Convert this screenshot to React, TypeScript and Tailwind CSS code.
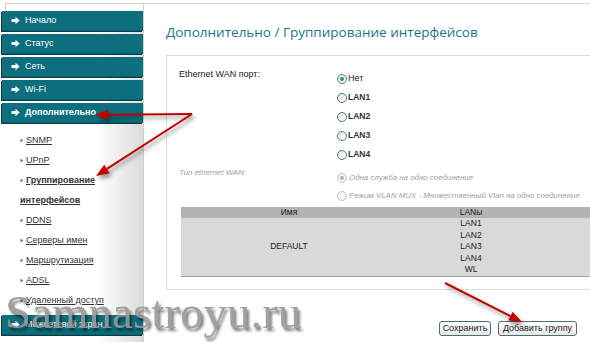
import React from 'react'

const topMenu = ['Начало', 'Статус', 'Сеть', 'Wi-Fi']
const subMenu = ['SNMP', 'UPnP', 'Группирование интерфейсов', 'DDNS', 'Серверы имен', 'Маршрутизация', 'ADSL', 'Удаленный доступ']
const ports = ['Нет', 'LAN1', 'LAN2', 'LAN3', 'LAN4']
const lans = ['LAN1', 'LAN2', 'LAN3', 'LAN4', 'WL']

function BarArrow() {
  return (
    <svg width="9" height="9" viewBox="0 0 9 9" className="shrink-0">
      <path d="M0.5 3 H4.5 V0.8 L8.6 4.5 L4.5 8.2 V6 H0.5 Z" fill="#fff" />
    </svg>
  )
}

function MenuBar({ label, bold }: { label: string; bold?: boolean }) {
  return (
    <div className="ml-[2px] w-[141px] h-[20px] bg-[#0d6f7e] flex items-center gap-[5px] pl-[9px] shadow-[-1px_1px_0_#07404a] border-b border-[#0a5d6a]">
      <BarArrow />
      <span className={`text-white text-[9px] ${bold ? 'font-bold' : ''}`}>{label}</span>
    </div>
  )
}

function Radio({ checked, disabled }: { checked?: boolean; disabled?: boolean }) {
  return (
    <span
      className={`w-[10px] h-[10px] rounded-full border flex items-center justify-center shrink-0 ${
        disabled ? 'border-[#c4c4c4] bg-[#f6f6f6]' : 'border-[#5a7688] bg-[linear-gradient(135deg,#dfe3e6,#ffffff)]'
      }`}
    >
      {checked && <span className={`w-[4px] h-[4px] rounded-full ${disabled ? 'bg-[#b0b0b0]' : 'bg-[#2f9a3c]'}`} />}
    </span>
  )
}

function Arrow({ x1, y1, x2, y2 }: { x1: number; y1: number; x2: number; y2: number }) {
  const a = Math.atan2(y2 - y1, x2 - x1)
  const len = 13
  const w = 5
  const bx = x2 - Math.cos(a) * len
  const by = y2 - Math.sin(a) * len
  const px = -Math.sin(a) * w
  const py = Math.cos(a) * w
  return (
    <g>
      <line x1={x1} y1={y1} x2={bx} y2={by} stroke="#c40000" strokeWidth="2" />
      <polygon points={`${x2},${y2} ${bx + px},${by + py} ${bx - px},${by - py}`} fill="#c40000" />
    </g>
  )
}

export default function App() {
  return (
    <div className="relative w-[590px] h-[342px] overflow-hidden bg-white font-['Liberation_Sans',sans-serif] text-[#222]">
      <div className="flex h-full">
        {/* left menu */}
        <div className="w-[145px] shrink-0 pt-[3px]">
          <div className="h-full border-r border-[#cfcfcf] bg-[linear-gradient(to_right,#ffffff_68%,#dcdcdc)] mr-[1px]">
            <div className="ml-[5px] h-[8px] border-l border-t border-[#cfcfcf] bg-white" />
            <div className="flex flex-col gap-[3px]">
              {topMenu.map((m) => (
                <MenuBar key={m} label={m} />
              ))}
              <MenuBar label="Дополнительно" bold />
            </div>
            <ul className="pt-[7px] pl-[20px] pr-[8px]">
              {subMenu.map((s) => {
                const active = s.startsWith('Групп')
                return (
                  <li key={s} className="leading-[20px] text-[9px]">
                    <svg width="4" height="5" viewBox="0 0 4 5" className="inline-block mr-[2px] align-middle">
                      <path d="M0.5 0.5 L3.5 2.5 L0.5 4.5 Z" fill="#4b95a6" />
                    </svg>
                    <span className={`underline text-[#333] ${active ? 'font-bold text-[#111]' : ''}`}>{s}</span>
                  </li>
                )
              })}
            </ul>
            <div className="mt-[5px]">
              <MenuBar label="Межсетевой экран" />
            </div>
          </div>
        </div>

        {/* main */}
        <div className="flex-1 pt-[3px] min-w-0">
          <div className="border-t border-[#d6d6d6] h-full">
            <h1 className="mt-[19px] ml-[21px] text-[13.5px] leading-[18px] text-[#1a7686] font-['Open_Sans',sans-serif] whitespace-nowrap">
              Дополнительно / Группирование интерфейсов
            </h1>
            <div className="mt-[14px] ml-[21px] w-[440px] border border-[#dcdcdc] pt-[12px] pb-[12px] pl-[12px] text-[9px]">
              <div className="flex">
                <div className="w-[158px] leading-[12px] text-[#222]">Ethernet WAN порт:</div>
                <div className="mt-[1px] flex flex-col">
                  {ports.map((p, i) => (
                    <div key={p} className="h-[19px] flex items-center gap-[1px]">
                      <Radio checked={i === 0} />
                      <span className={i === 0 ? 'text-[#222]' : 'font-bold text-[#333] text-[8.5px]'}>{p}</span>
                    </div>
                  ))}
                </div>
              </div>
              <div className="flex mt-[3px] italic text-[#a0a0a0] text-[7.9px]">
                <div className="w-[158px] leading-[12px]">Тип ethernet WAN:</div>
                <div className="mt-[2px] flex flex-col">
                  <div className="h-[18px] flex items-center gap-[2px]">
                    <Radio checked disabled />
                    <span>Одна служба на одно соединение</span>
                  </div>
                  <div className="h-[18px] flex items-center gap-[2px] whitespace-nowrap">
                    <Radio disabled />
                    <span>Режим VLAN MUX - Множественный Vlan на одно соединение</span>
                  </div>
                </div>
              </div>
              <div className="mt-[2px] ml-[2px] text-[8.5px] text-[#222] border-b border-[#a6a6a6]">
                <div className="grid grid-cols-[216px_148px_1fr] bg-[#b3b3b3] h-[11px] leading-[11px]">
                  <div className="text-center">Имя</div>
                  <div className="text-center">LANы</div>
                  <div />
                </div>
                <div className="grid grid-cols-[216px_148px_1fr] bg-[#d9d9d9]">
                  <div className="flex items-center justify-center">DEFAULT</div>
                  <div className="flex flex-col">
                    {lans.map((l) => (
                      <div key={l} className="text-center leading-[11.5px]">
                        {l}
                      </div>
                    ))}
                  </div>
                  <div />
                </div>
              </div>
            </div>
            <div className="mt-[31px] flex justify-end gap-[7px] pr-[13px] text-[9px]">
              <button className="w-[52px] h-[15px] rounded-[3px] border border-[#4f6b7a] bg-[linear-gradient(#ffffff,#e6e6e6)] text-[#222] leading-[13px]">
                Сохранить
              </button>
              <button className="w-[79px] h-[15px] rounded-[3px] border border-[#4f6b7a] bg-[linear-gradient(#ffffff,#e6e6e6)] text-[#222] leading-[13px]">
                Добавить группу
              </button>
            </div>
          </div>
        </div>
      </div>

      {/* watermark */}
      <div className="absolute left-[5px] top-[289px] text-[47px] leading-[47px] font-['Liberation_Serif',serif] text-[#979797] opacity-90 [text-shadow:2px_3px_3px_rgba(0,0,0,0.6)] pointer-events-none">
        Samnastroyu.ru
      </div>

      {/* red arrows */}
      <svg className="absolute inset-0 pointer-events-none drop-shadow-[2px_3px_2px_rgba(0,0,0,0.45)]" width="590" height="342">
        <Arrow x1={192} y1={114} x2={95} y2={115} />
        <Arrow x1={192} y1={114} x2={96} y2={176} />
        <Arrow x1={445} y1={283} x2={522} y2={322} />
      </svg>
    </div>
  )
}
